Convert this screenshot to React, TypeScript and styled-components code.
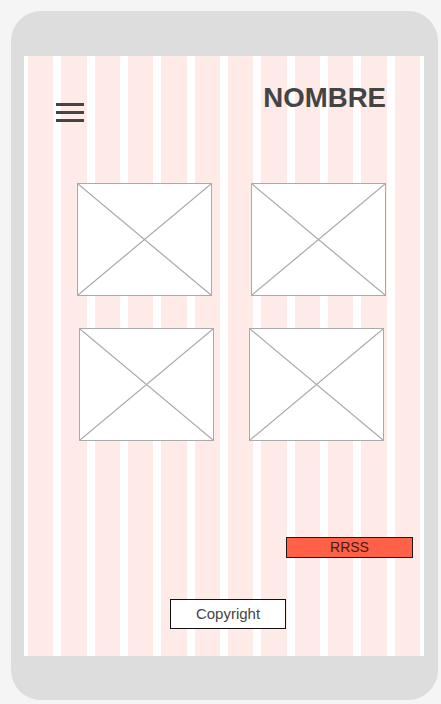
import React from 'react';
import styled, { createGlobalStyle } from 'styled-components';

const GlobalStyle = createGlobalStyle`
  html, body {
    margin: 0;
    padding: 0;
    background: #f5f5f5;
    font-family: 'Liberation Sans', Arial, sans-serif;
  }
`;

const rows = [
  { inset: 49, gap: 39 },
  { inset: 51, gap: 35 },
];

export default function App() {
  return (
    <>
      <GlobalStyle />
      <Page>
        <Phone>
          <Screen>
            <Header>
              <Burger aria-label="menu">
                <Bar />
                <Bar />
                <Bar />
              </Burger>
              <Title>NOMBRE</Title>
            </Header>
            <Gallery>
              {rows.map((row, i) => (
                <GalleryRow key={i} $inset={row.inset} $gap={row.gap}>
                  <Placeholder />
                  <Placeholder />
                </GalleryRow>
              ))}
            </Gallery>
            <SocialRow>
              <SocialButton>RRSS</SocialButton>
            </SocialRow>
            <Footer>
              <Copyright>Copyright</Copyright>
            </Footer>
          </Screen>
        </Phone>
      </Page>
    </>
  );
}

const Placeholder: React.FC = () => (
  <ImageBox>
    <svg width="100%" height="100%" viewBox="0 0 133 111" preserveAspectRatio="none">
      <line x1="0" y1="0" x2="133" y2="111" stroke="#a8a8a8" strokeWidth="1.2" />
      <line x1="133" y1="0" x2="0" y2="111" stroke="#a8a8a8" strokeWidth="1.2" />
    </svg>
  </ImageBox>
);

const Page = styled.div`
  padding: 11px;
`;

const Phone = styled.div`
  box-sizing: border-box;
  width: 427px;
  height: 689px;
  padding: 45px 14px 0 13px;
  background: #dddddd;
  border-radius: 30px;
`;

const Screen = styled.div`
  box-sizing: border-box;
  width: 400px;
  height: 600px;
  padding: 0 4px;
  display: flex;
  flex-direction: column;
  background:
    repeating-linear-gradient(
      to right,
      #feeae6 0,
      #feeae6 25.33px,
      #ffffff 25.33px,
      #ffffff 33.33px
    ) content-box,
    #ffffff;
`;

const Header = styled.header`
  display: flex;
  justify-content: space-between;
  align-items: flex-start;
  padding: 28px 34px 0 28px;
`;

const Burger = styled.div`
  margin-top: 19px;
  width: 28px;
  display: flex;
  flex-direction: column;
  gap: 5px;
`;

const Bar = styled.span`
  display: block;
  height: 3px;
  background: #444444;
`;

const Title = styled.h1`
  margin: 0;
  font-size: 27.6px;
  line-height: 28px;
  font-weight: 700;
  color: #444444;
`;

const Gallery = styled.div`
  margin-top: 61px;
  display: flex;
  flex-direction: column;
  gap: 32px;
`;

const GalleryRow = styled.div<{ $inset: number; $gap: number }>`
  display: flex;
  padding-left: ${(p) => p.$inset}px;
  gap: ${(p) => p.$gap}px;
`;

const ImageBox = styled.div`
  box-sizing: border-box;
  width: 135px;
  height: 113px;
  border: 1px solid #aaaaaa;
  background: #ffffff;

  svg {
    display: block;
  }
`;

const SocialRow = styled.div`
  display: flex;
  justify-content: flex-end;
  padding-right: 7px;
  margin-top: 96px;
`;

const SocialButton = styled.div`
  box-sizing: border-box;
  width: 127px;
  height: 21px;
  border: 1px solid #1a1a1a;
  background: #fe6148;
  color: #4a1a12;
  font-size: 14px;
  line-height: 19px;
  text-align: center;
`;

const Footer = styled.footer`
  display: flex;
  padding-left: 142px;
  margin-top: 41px;
`;

const Copyright = styled.div`
  box-sizing: border-box;
  width: 116px;
  height: 30px;
  border: 1px solid #111111;
  background: #ffffff;
  color: #444444;
  font-size: 15px;
  line-height: 28px;
  text-align: center;
`;
